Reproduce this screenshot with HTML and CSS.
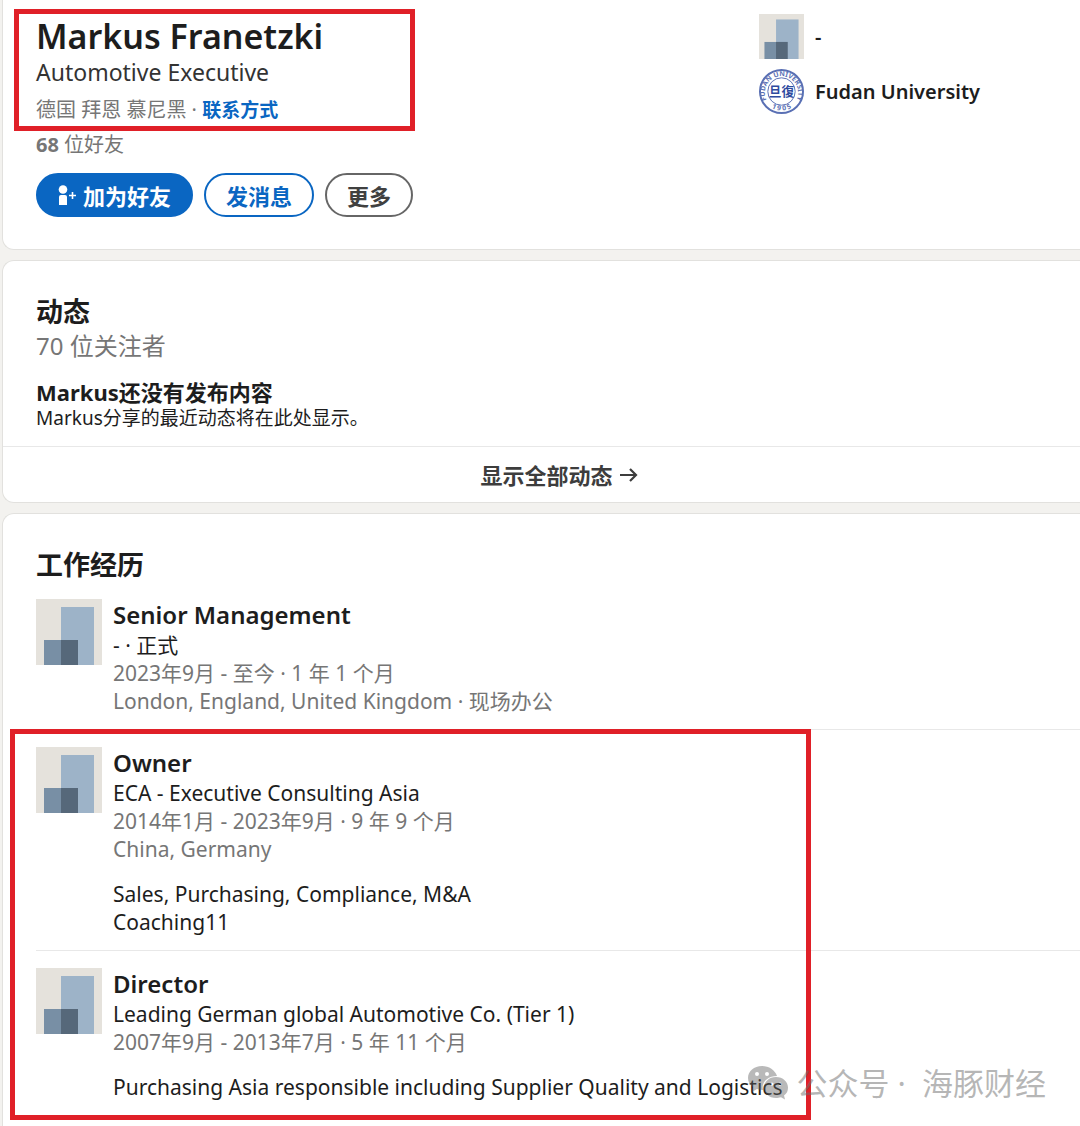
FILE: index.html
```html
<!DOCTYPE html>
<html lang="zh-CN">
<head>
    <meta charset="UTF-8">
    <meta name="viewport" content="width=device-width, initial-scale=1.0">
    <title>Markus Franetzki</title>
    <link rel="stylesheet" href="styles.css">
</head>
<body>
    <!-- shared company placeholder logo -->
    <svg class="sprite" width="0" height="0" aria-hidden="true">
        <symbol id="company" viewBox="0 0 66 66">
            <rect width="66" height="66" fill="#e5e2dc"/>
            <rect x="25" y="8" width="33" height="58" fill="#9db3c8"/>
            <rect x="8" y="41" width="34" height="25" fill="#788fa5"/>
            <rect x="25" y="41" width="17" height="25" fill="#56687a"/>
        </symbol>
    </svg>

    <main class="page">
        <section class="card profile">
            <div class="intro">
                <h1>Markus Franetzki</h1>
                <p class="headline">Automotive Executive</p>
                <p class="meta location">德国 拜恩 慕尼黑 · <a href="#contact">联系方式</a></p>
                <p class="meta"><b>68</b> 位好友</p>
                <div class="actions">
                    <button type="button" class="btn primary">
                        <svg width="19" height="22" viewBox="0 0 19 22" aria-hidden="true">
                            <circle cx="5" cy="5.5" r="4.3" fill="#fff"/>
                            <path d="M3 11h4a2 2 0 0 1 2 2v8H1v-8a2 2 0 0 1 2-2z" fill="#fff"/>
                            <path d="M14.500 8v7M11 11.500h7" stroke="#fff" stroke-width="1.600"/>
                        </svg>
                        加为好友
                    </button>
                    <button type="button" class="btn message">发消息</button>
                    <button type="button" class="btn more">更多</button>
                </div>
            </div>
            <ul class="education">
                <li>
                    <svg class="small-logo" aria-hidden="true"><use href="#company"/></svg>
                    <span>-</span>
                </li>
                <li>
                    <svg class="small-logo" viewBox="0 0 46 46" aria-hidden="true">
                        <defs>
                            <path id="arc-top" d="M9 34A17 17 0 1 1 37 34"/>
                            <path id="arc-bottom" d="M7 35A21 21 0 0 0 39 35"/>
                        </defs>
                        <circle cx="23" cy="23" r="22" fill="#fff" stroke="#5a70b4" stroke-width="2"/>
                        <circle cx="23" cy="23" r="14" fill="none" stroke="#5a70b4"/>
                        <text class="seal-ring"><textPath href="#arc-top" startOffset="50%">FUDAN UNIVERSITY</textPath></text>
                        <text class="seal-ring"><textPath href="#arc-bottom" startOffset="50%">1 9 0 5</textPath></text>
                        <text class="seal-core" x="23" y="28">旦復</text>
                    </svg>
                    <span>Fudan University</span>
                </li>
            </ul>
            <div class="mark mark-intro"></div>
        </section>

        <section class="card activity">
            <h2>动态</h2>
            <p class="followers">70 位关注者</p>
            <h3>Markus还没有发布内容</h3>
            <p class="note">Markus分享的最近动态将在此处显示。</p>
            <a class="show-all" href="#activity">
                显示全部动态
                <svg width="20" height="20" viewBox="0 0 20 20" aria-hidden="true">
                    <path d="M1 10h16M11 4l6 6-6 6" fill="none" stroke="#3d3d3d" stroke-width="2.200"/>
                </svg>
            </a>
        </section>

        <section class="card experience">
            <h2>工作经历</h2>
            <ul class="jobs">
                <li class="job">
                    <svg class="logo" aria-hidden="true"><use href="#company"/></svg>
                    <div class="job-body">
                        <h3>Senior Management</h3>
                        <p>- · 正式</p>
                        <p class="dim">2023年9月 - 至今 · 1 年 1 个月</p>
                        <p class="dim">London, England, United Kingdom · 现场办公</p>
                    </div>
                </li>
                <li class="job">
                    <svg class="logo" aria-hidden="true"><use href="#company"/></svg>
                    <div class="job-body">
                        <h3>Owner</h3>
                        <p>ECA - Executive Consulting Asia</p>
                        <p class="dim">2014年1月 - 2023年9月 · 9 年 9 个月</p>
                        <p class="dim">China, Germany</p>
                        <p class="description">Sales, Purchasing, Compliance, M&amp;A<br>Coaching11</p>
                    </div>
                </li>
                <li class="job">
                    <svg class="logo" aria-hidden="true"><use href="#company"/></svg>
                    <div class="job-body">
                        <h3>Director</h3>
                        <p>Leading German global Automotive Co. (Tier 1)</p>
                        <p class="dim">2007年9月 - 2013年7月 · 5 年 11 个月</p>
                        <p class="description">Purchasing Asia responsible including Supplier Quality and Logistics</p>
                    </div>
                </li>
            </ul>
            <div class="mark mark-jobs"></div>
            <div class="watermark">
                <svg width="42" height="36" viewBox="0 0 42 36" aria-hidden="true">
                    <path fill-rule="evenodd" d="M15 1C7 1 1 6 1 13c0 4 2 7 5 9l-1 5 5-3c2 .6 4 1 6 1-2-8 5-14 14-14C28 5 22 1 15 1zM10 7a2 2 0 1 1 0 4 2 2 0 0 1 0-4zm10 0a2 2 0 1 1 0 4 2 2 0 0 1 0-4z"/>
                    <path fill-rule="evenodd" d="M29 12c-7 0-12 5-12 10.500S22 33 29 33c2 0 3-.3 5-.8l4 2.300-1-4c3-2 4-5 4-8C41 17 36 12 29 12zm-4 5.500a1.600 1.600 0 1 1 0 3.200 1.600 1.600 0 0 1 0-3.200zm8 0a1.600 1.600 0 1 1 0 3.200 1.600 1.600 0 0 1 0-3.200z"/>
                </svg>
                <span>公众号 ·&nbsp; 海豚财经</span>
            </div>
        </section>
    </main>
</body>
</html>
```
FILE: styles.css
```css
* {
    box-sizing: border-box;
}
body {
    margin: 0;
    background-color: #f3f2ef;
    color: #1d1d1d;
    font-family: "Noto Sans", "Noto Sans CJK SC", sans-serif;
    font-size: 21px;
    line-height: 28px;
}
h1, h2, h3, p, ul {
    margin: 0;
    padding: 0;
}
ul {
    list-style: none;
}
a {
    text-decoration: none;
}
.sprite {
    position: absolute;
}
.page {
    display: flex;
    flex-direction: column;
    gap: 10px;
    padding-left: 2px;
}
.card {
    position: relative;
    background: #fff;
    border: 1px solid #e2e1de;
    border-right: 0;
    border-radius: 12px 0 0 12px;
    padding: 33px 0 0 33px;
}

/* profile header */
.profile {
    display: flex;
    justify-content: space-between;
    border-top: 0;
    border-top-left-radius: 0;
    padding-top: 14px;
    padding-bottom: 32px;
}
h1 {
    font-size: 34px;
    font-weight: 600;
    line-height: 44px;
}
.headline {
    font-size: 23px;
    line-height: 28px;
    color: #333;
}
.meta {
    font-size: 20px;
    color: #767676;
}
.location {
    margin: 10px 0 7px;
}
.location a {
    color: #0a66c2;
    font-size: 19px;
    font-weight: bold;
}
.actions {
    display: flex;
    gap: 11px;
    margin-top: 14px;
}
.btn {
    display: flex;
    align-items: center;
    gap: 6px;
    height: 44px;
    padding: 0 20px;
    border: 2px solid #0a66c2;
    border-radius: 22px;
    background: #fff;
    color: #0a66c2;
    font-family: inherit;
    font-size: 22px;
    font-weight: bold;
    cursor: pointer;
}
.primary {
    background: #0a66c2;
    color: #fff;
}
.more {
    border-color: #666;
    color: #404040;
}
.education {
    flex: 0 0 321px;
    font-size: 20px;
    font-weight: 600;
}
.education li {
    display: flex;
    align-items: center;
    gap: 11px;
    height: 45px;
    margin-bottom: 10px;
}
.small-logo {
    width: 45px;
    height: 45px;
}
.seal-ring {
    fill: #5a70b4;
    font-size: 7px;
    font-weight: bold;
    text-anchor: middle;
}
.seal-core {
    fill: #2f4b9f;
    font-size: 13px;
    font-weight: bold;
    text-anchor: middle;
}

/* activity and experience */
h2 {
    font-size: 27px;
    line-height: 36px;
}
.followers {
    font-size: 24px;
    line-height: 32px;
    color: #767676;
}
.activity h3 {
    margin-top: 17px;
    font-size: 22px;
    line-height: 26px;
}
.note {
    font-size: 19px;
    line-height: 26px;
}
.show-all {
    display: flex;
    align-items: center;
    justify-content: center;
    gap: 6px;
    height: 56px;
    margin: 15px 0 0 -33px;
    padding-left: 36px;
    border-top: 1px solid #e8e8e8;
    color: #3d3d3d;
    font-size: 22px;
    font-weight: bold;
}
.experience {
    padding-bottom: 26px;
    border-bottom: 0;
    border-bottom-left-radius: 0;
}
.jobs {
    margin-top: 16px;
}
.job {
    display: flex;
    gap: 11px;
}
.job + .job {
    margin-top: 14px;
    padding-top: 17px;
    border-top: 1px solid #e8e8e8;
}
.logo {
    flex: none;
    width: 66px;
    height: 66px;
}
.job h3 {
    font-size: 24px;
    font-weight: 600;
    line-height: 32px;
}
.dim {
    color: #767676;
}
.description {
    margin-top: 17px;
}

/* red highlight frames */
.mark {
    position: absolute;
    border: 5px solid #e02028;
    pointer-events: none;
}
.mark-intro {
    top: 9px;
    left: 11px;
    width: 401px;
    height: 122px;
}
.mark-jobs {
    top: 215px;
    left: 7px;
    width: 801px;
    height: 391px;
}
.watermark {
    position: absolute;
    right: 34px;
    bottom: 26px;
    display: flex;
    align-items: center;
    gap: 8px;
    color: rgba(110, 110, 110, 0.5);
    font-size: 31px;
    line-height: 36px;
}
.watermark svg {
    fill: rgba(100, 100, 100, 0.45);
}
```
